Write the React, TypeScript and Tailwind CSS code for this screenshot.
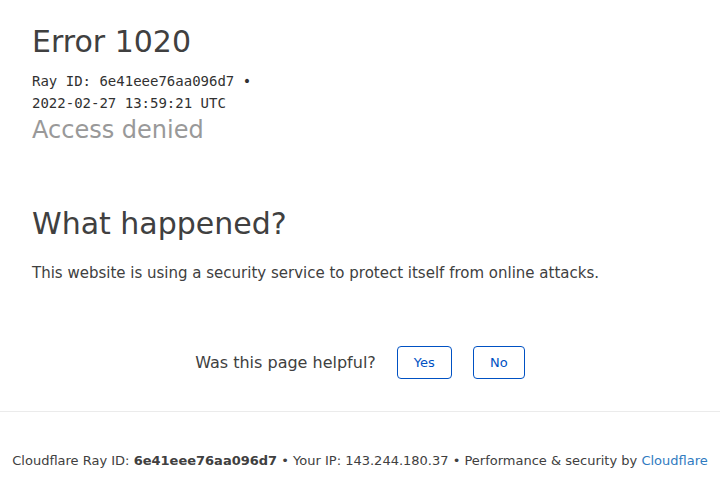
export default function App() {
  return (
    <div className="flex min-h-[480px] w-[720px] flex-col bg-white font-['DejaVu_Sans',sans-serif] text-[#404040]">
      <div className="px-8 pt-[22px]">
        <h1 className="text-[30px] leading-[40px]">Error 1020</h1>
        <div className="mt-[8px] font-['DejaVu_Sans_Mono',monospace] text-[14px] leading-[22px] text-[#313131]">
          <div>Ray ID: 6e41eee76aa096d7 •</div>
          <div>2022-02-27 13:59:21 UTC</div>
        </div>
        <h2 className="text-[24px] leading-[32px] text-[#999999]">Access denied</h2>

        <h2 className="mt-[58px] text-[30px] leading-[40px]">What happened?</h2>
        <p className="mt-[17px] text-[15px] leading-[24px]">
          This website is using a security service to protect itself from online attacks.
        </p>
      </div>

      <div className="mt-[61px] flex items-center justify-center gap-[21px]">
        <span className="text-[16px] leading-[24px]">Was this page helpful?</span>
        <button className="h-[33px] w-[55px] rounded-[4px] border border-[#0051c3] text-[13px] text-[#0051c3]">
          Yes
        </button>
        <button className="h-[33px] w-[52px] rounded-[4px] border border-[#0051c3] text-[13px] text-[#0051c3]">
          No
        </button>
      </div>

      <div className="mt-[32px] border-t border-[#ebebeb]" />

      <p className="mt-[39px] text-center text-[13px] leading-[20px]">
        Cloudflare Ray ID: <strong className="font-bold">6e41eee76aa096d7</strong> • Your IP: 143.244.180.37 •
        Performance &amp; security by <span className="text-[#2f7bbf]">Cloudflare</span>
      </p>
    </div>
  );
}
